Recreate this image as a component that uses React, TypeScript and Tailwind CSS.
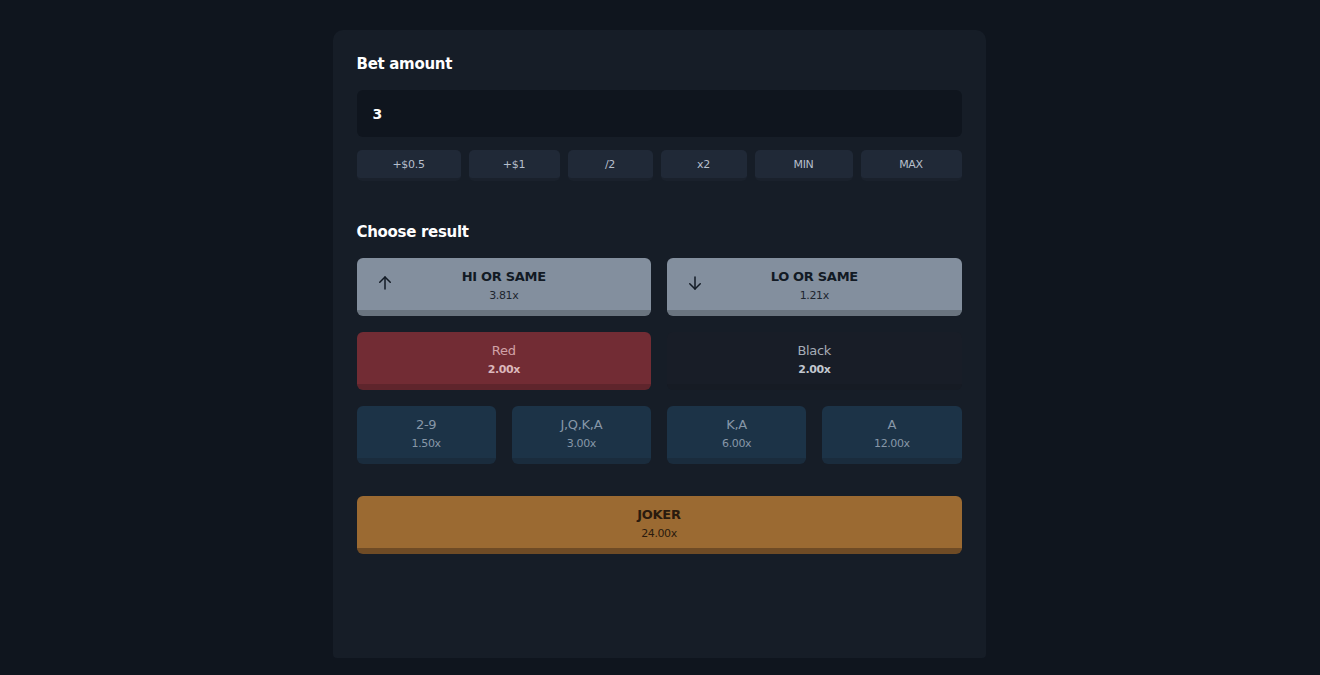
import React from 'react';

const quick = [
  { label: '+$0.5', w: 'w-[104px]' },
  { label: '+$1', w: 'w-[91px]' },
  { label: '/2', w: 'w-[85px]' },
  { label: 'x2', w: 'w-[86px]' },
  { label: 'MIN', w: 'w-[98px]' },
  { label: 'MAX', w: 'w-[101px]' },
];

const ranks = [
  { label: '2-9', odds: '1.50x' },
  { label: 'J,Q,K,A', odds: '3.00x' },
  { label: 'K,A', odds: '6.00x' },
  { label: 'A', odds: '12.00x' },
];

function ArrowUp() {
  return (
    <svg width="18" height="18" viewBox="0 0 24 24" fill="none" stroke="currentColor" strokeWidth="2" strokeLinecap="round" strokeLinejoin="round">
      <path d="M12 20V4" />
      <path d="M5 11l7-7 7 7" />
    </svg>
  );
}

function ArrowDown() {
  return (
    <svg width="18" height="18" viewBox="0 0 24 24" fill="none" stroke="currentColor" strokeWidth="2" strokeLinecap="round" strokeLinejoin="round">
      <path d="M12 4v16" />
      <path d="M5 13l7 7 7-7" />
    </svg>
  );
}

export default function App() {
  return (
    <div
      className="min-h-[675px] w-full bg-[#0f151e] flex justify-center pt-[30px] pr-[2px]"
      style={{ fontFamily: '"DejaVu Sans", Inter, sans-serif' }}
    >
      <div className="w-[653px] h-[628px] bg-[#161d27] rounded-t-[10px] rounded-b-[4px] pl-6 pr-[24px] pt-[23px]">
        <h2 className="text-[15px] font-bold text-white leading-[22px] tracking-[-0.3px]">Bet amount</h2>

        <div className="mt-[15px] h-[47px] rounded-[6px] bg-[#0f151e] flex items-center px-4">
          <span className="text-[14px] font-semibold text-white pt-[2px]">3</span>
        </div>

        <div className="mt-[13px] flex gap-2">
          {quick.map((q) => (
            <button
              key={q.label}
              className={`${q.w} h-[31px] rounded-[5px] bg-[#202937] border-b-[3px] border-[#1a212c] text-[11px] text-[#b6bfcc] tracking-[-0.3px] flex items-center justify-center pt-[3px]`}
            >
              {q.label}
            </button>
          ))}
        </div>

        <h2 className="mt-[40px] text-[15px] font-bold text-white leading-[22px] tracking-[-0.3px]">Choose result</h2>

        <div className="mt-[15px] grid grid-cols-2 gap-4">
          <button className="relative h-[58px] rounded-[6px] bg-[#838f9e] border-b-[6px] border-[#6a747f] flex flex-col items-center justify-center pt-[3px] text-[#121a24]">
            <span className="absolute left-[19px] top-[16px]"><ArrowUp /></span>
            <span className="text-[13px] font-bold leading-[18px] tracking-[-0.3px]">HI OR SAME</span>
            <span className="mt-[2px] text-[11px] leading-[16px] tracking-[-0.4px] text-[#1e2630]">3.81x</span>
          </button>
          <button className="relative h-[58px] rounded-[6px] bg-[#838f9e] border-b-[6px] border-[#6a747f] flex flex-col items-center justify-center pt-[3px] text-[#121a24]">
            <span className="absolute left-[19px] top-[16px]"><ArrowDown /></span>
            <span className="text-[13px] font-bold leading-[18px] tracking-[-0.3px]">LO OR SAME</span>
            <span className="mt-[2px] text-[11px] leading-[16px] tracking-[-0.4px] text-[#1e2630]">1.21x</span>
          </button>
        </div>

        <div className="mt-4 grid grid-cols-2 gap-4">
          <button className="h-[58px] rounded-[6px] bg-[#722c34] border-b-[6px] border-[#5f252c] flex flex-col items-center justify-center pt-[3px]">
            <span className="text-[13px] leading-[18px] tracking-[-0.3px] text-[#d1a2a7]">Red</span>
            <span className="mt-[2px] text-[11px] font-semibold leading-[16px] tracking-[-0.4px] text-[#dbb7bb]">2.00x</span>
          </button>
          <button className="h-[58px] rounded-[6px] bg-[#181d27] border-b-[6px] border-[#161b24] flex flex-col items-center justify-center pt-[3px]">
            <span className="text-[13px] leading-[18px] tracking-[-0.3px] text-[#a5acb6]">Black</span>
            <span className="mt-[2px] text-[11px] font-semibold leading-[16px] tracking-[-0.4px] text-[#c2c7cf]">2.00x</span>
          </button>
        </div>

        <div className="mt-4 grid grid-cols-4 gap-4">
          {ranks.map((r) => (
            <button
              key={r.label}
              className="h-[58px] rounded-[6px] bg-[#1c3347] border-b-[6px] border-[#1a2c3d] flex flex-col items-center justify-center pt-[3px]"
            >
              <span className="text-[13px] leading-[18px] tracking-[-0.3px] text-[#8797a8]">{r.label}</span>
              <span className="mt-[2px] text-[11px] leading-[16px] tracking-[-0.4px] text-[#8797a8]">{r.odds}</span>
            </button>
          ))}
        </div>

        <button className="mt-8 w-full h-[58px] rounded-[6px] bg-[#9b6a32] border-b-[6px] border-[#6f4b25] flex flex-col items-center justify-center pt-[3px]">
          <span className="text-[13px] font-bold leading-[18px] tracking-[-0.3px] text-[#2a1b0e]">JOKER</span>
          <span className="mt-[2px] text-[11px] leading-[16px] tracking-[-0.4px] text-[#2a1b0e]">24.00x</span>
        </button>
      </div>
    </div>
  );
}
